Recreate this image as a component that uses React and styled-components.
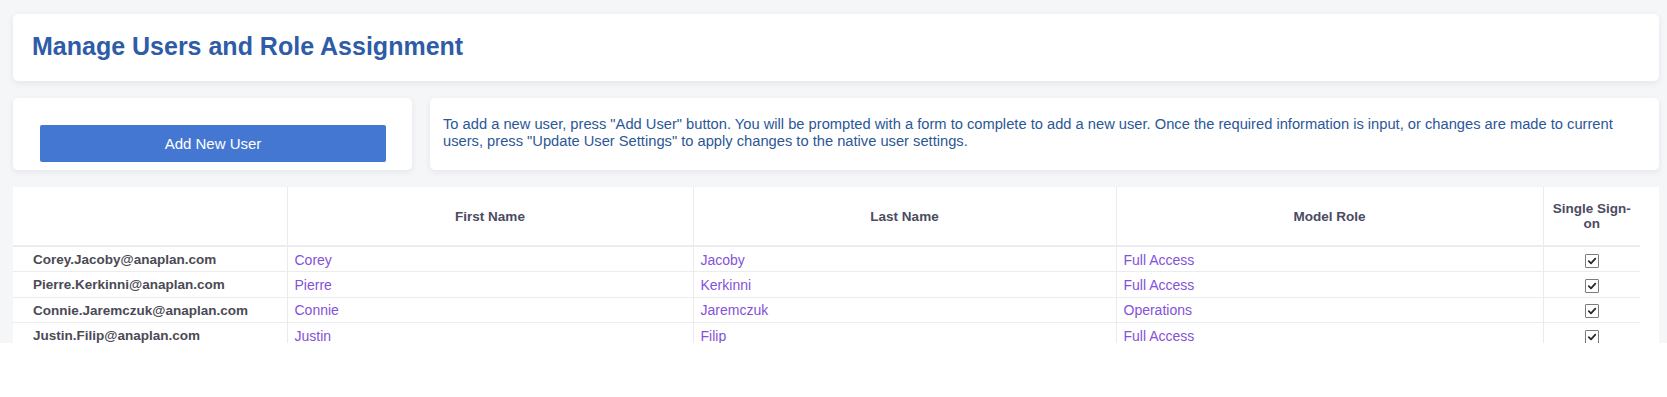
import React from "react";
import styled, { createGlobalStyle } from "styled-components";

const GlobalStyle = createGlobalStyle`
  html, body { margin: 0; padding: 0; background: #ffffff; }
  body { font-family: "Liberation Sans", Arial, Helvetica, sans-serif; }
  * { box-sizing: border-box; }
`;

const Page = styled.div`
  height: 343px;
  overflow: hidden;
  background: #f5f6f8;
  padding: 14px 8px 0 13px;
  display: flex;
  flex-direction: column;
  gap: 17px;
`;

const Card = styled.div`
  background: #ffffff;
  border-radius: 5px;
  box-shadow: 0 2px 6px rgba(30, 40, 60, 0.08);
`;

const TitleCard = styled(Card)`
  height: 67px;
  flex: none;
  display: flex;
  align-items: center;
  padding: 0 19px 2px;
`;

const Title = styled.h1`
  margin: 0;
  font-size: 25px;
  font-weight: 700;
  color: #2e5ca7;
`;

const ActionRow = styled.div`
  display: flex;
  gap: 18px;
  height: 72px;
  flex: none;
`;

const ButtonCard = styled(Card)`
  width: 399px;
  flex: none;
  padding: 27px 26px 8px 27px;
`;

const PrimaryButton = styled.button`
  width: 100%;
  height: 37px;
  border: none;
  border-radius: 2px;
  background: #4477d1;
  color: #ffffff;
  font-family: "Liberation Sans", Arial, sans-serif;
  font-size: 15px;
  cursor: pointer;
`;

const InfoCard = styled(Card)`
  flex: 1;
  display: flex;
  align-items: center;
  padding: 0 13px 3px 13px;
`;

const InfoText = styled.p`
  margin: 0;
  font-size: 14.7px;
  line-height: 17px;
  color: #2c5796;
`;

const TableCard = styled.div`
  flex: 1;
  min-height: 0;
  background: #ffffff;
  overflow: hidden;
`;

const Table = styled.table`
  width: 1627px;
  table-layout: fixed;
  border-collapse: collapse;
`;

const HeadCell = styled.th`
  height: 59px;
  padding: 0 8px;
  text-align: center;
  vertical-align: middle;
  font-size: 13.5px;
  line-height: 15px;
  font-weight: 700;
  color: #4b4b62;
  border-bottom: 2px solid #ececf0;
  border-left: 1px solid #ebebef;
  &:first-child { border-left: none; }
`;

const Cell = styled.td`
  height: 25.5px;
  padding: ${(p) => (p.$email ? "2px 7px 0 20px" : "1px 7px 0")};
  font-size: ${(p) => (p.$email ? "13.5px" : "14px")};
  line-height: 16px;
  font-weight: ${(p) => (p.$email ? 700 : 400)};
  color: ${(p) => (p.$email ? "#4a4a55" : "#8452d7")};
  text-align: ${(p) => (p.$center ? "center" : "left")};
  vertical-align: middle;
  white-space: nowrap;
  border-bottom: 1px solid #ececef;
  border-left: 1px solid #ebebef;
  &:first-child { border-left: none; }
`;

const CheckBox = styled.span`
  display: inline-flex;
  align-items: center;
  justify-content: center;
  width: 14px;
  height: 14px;
  border: 1px solid #7b7b7b;
  border-radius: 1px;
  background: #ffffff;
  vertical-align: middle;
`;

const Check = () => (
  <CheckBox>
    <svg width="10" height="10" viewBox="0 0 10 10">
      <path d="M1.8 5.2 L4 7.4 L8.3 2.6" fill="none" stroke="#2a2a2a" strokeWidth="1.8" strokeLinecap="round" strokeLinejoin="round" />
    </svg>
  </CheckBox>
);

const users = [
  { email: "Corey.Jacoby@anaplan.com", first: "Corey", last: "Jacoby", role: "Full Access" },
  { email: "Pierre.Kerkinni@anaplan.com", first: "Pierre", last: "Kerkinni", role: "Full Access" },
  { email: "Connie.Jaremczuk@anaplan.com", first: "Connie", last: "Jaremczuk", role: "Operations" },
  { email: "Justin.Filip@anaplan.com", first: "Justin", last: "Filip", role: "Full Access" },
];

export default function App() {
  return (
    <>
      <GlobalStyle />
      <Page>
        <TitleCard>
          <Title>Manage Users and Role Assignment</Title>
        </TitleCard>
        <ActionRow>
          <ButtonCard>
            <PrimaryButton>Add New User</PrimaryButton>
          </ButtonCard>
          <InfoCard>
            <InfoText>
              To add a new user, press "Add User" button. You will be prompted with a form to complete to add a new user. Once the required information is input, or changes are made to current users, press "Update User Settings" to apply changes to the native user settings.
            </InfoText>
          </InfoCard>
        </ActionRow>
        <TableCard>
          <Table>
            <colgroup>
              <col style={{ width: 274 }} />
              <col style={{ width: 406 }} />
              <col style={{ width: 423 }} />
              <col style={{ width: 427 }} />
              <col style={{ width: 97 }} />
            </colgroup>
            <thead>
              <tr>
                <HeadCell />
                <HeadCell>First Name</HeadCell>
                <HeadCell>Last Name</HeadCell>
                <HeadCell>Model Role</HeadCell>
                <HeadCell>Single Sign-on</HeadCell>
              </tr>
            </thead>
            <tbody>
              {users.map((u) => (
                <tr key={u.email}>
                  <Cell $email>{u.email}</Cell>
                  <Cell>{u.first}</Cell>
                  <Cell>{u.last}</Cell>
                  <Cell>{u.role}</Cell>
                  <Cell $center>
                    <Check />
                  </Cell>
                </tr>
              ))}
            </tbody>
          </Table>
        </TableCard>
      </Page>
    </>
  );
}
